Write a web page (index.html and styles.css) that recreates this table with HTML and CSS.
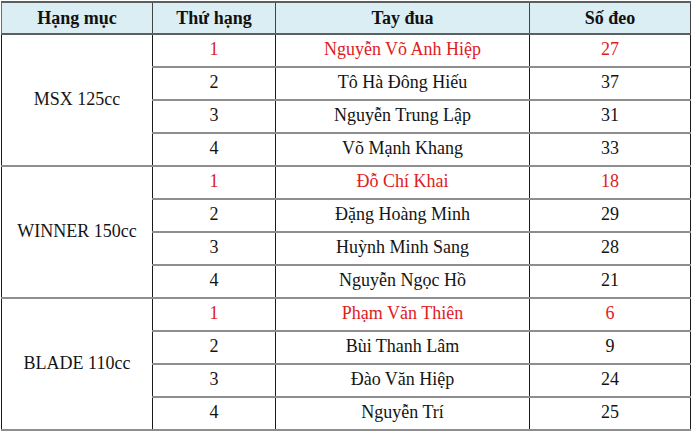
FILE: index.html
```html
<!DOCTYPE html>
<html lang="vi">
<head>
<meta charset="utf-8">
<link rel="stylesheet" href="styles.css">
</head>
<body>
<table class="results">
  <colgroup>
    <col class="c1"><col class="c2"><col class="c3"><col class="c4">
  </colgroup>
  <thead>
    <tr><th>Hạng mục</th><th>Thứ hạng</th><th>Tay đua</th><th>Số đeo</th></tr>
  </thead>
  <tbody>
    <tr class="win"><td rowspan="4" class="cat">MSX 125cc</td><td>1</td><td>Nguyễn Võ Anh Hiệp</td><td>27</td></tr>
    <tr><td>2</td><td>Tô Hà Đông Hiếu</td><td>37</td></tr>
    <tr><td>3</td><td>Nguyễn Trung Lập</td><td>31</td></tr>
    <tr><td>4</td><td>Võ Mạnh Khang</td><td>33</td></tr>
    <tr class="win"><td rowspan="4" class="cat">WINNER 150cc</td><td>1</td><td>Đỗ Chí Khai</td><td>18</td></tr>
    <tr><td>2</td><td>Đặng Hoàng Minh</td><td>29</td></tr>
    <tr><td>3</td><td>Huỳnh Minh Sang</td><td>28</td></tr>
    <tr><td>4</td><td>Nguyễn Ngọc Hồ</td><td>21</td></tr>
    <tr class="win"><td rowspan="4" class="cat">BLADE 110cc</td><td>1</td><td>Phạm Văn Thiên</td><td>6</td></tr>
    <tr><td>2</td><td>Bùi Thanh Lâm</td><td>9</td></tr>
    <tr><td>3</td><td>Đào Văn Hiệp</td><td>24</td></tr>
    <tr><td>4</td><td>Nguyễn Trí</td><td>25</td></tr>
  </tbody>
</table>
</body>
</html>
```
FILE: styles.css
```css
html, body {
  margin: 0;
  padding: 0;
  background: #ffffff;
}
body {
  padding: 1px 0 0 1px;
  font-family: "Liberation Serif", "Times New Roman", serif;
  font-size: 18px;
  color: #141414;
}
.results {
  border-collapse: collapse;
  table-layout: fixed;
  width: 689px;
}
.c1 { width: 151px; }
.c2 { width: 123px; }
.c3 { width: 254px; }
.c4 { width: 161px; }
.results th,
.results td {
  padding: 0 0 3px 0;
  text-align: center;
  vertical-align: middle;
  border-top: 2px solid #8e8e8e;
  border-bottom: 2px solid #8e8e8e;
  border-left: 1px solid #1a1a1a;
  border-right: 1px solid #1a1a1a;
  line-height: 20px;
}
.results th {
  padding: 0;
  background: #daeef3;
  font-weight: bold;
  height: 30px;
  border-top: 2px solid #5a5f62;
  border-bottom: 2px solid #5a5f62;
  border-left-color: #6a6f72;
  border-right-color: #444;
  color: #111;
}
.results td {
  height: 28px;
}
.results tr.win td {
  color: #e0201e;
}
.results tr.win td.cat {
  color: #141414;
}
```
